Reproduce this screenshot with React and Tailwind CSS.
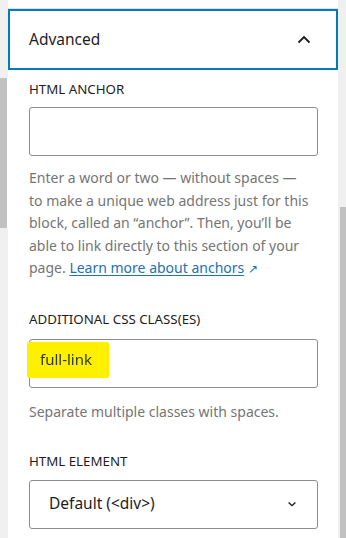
import React from "react";

const ChevronUp = () => (
  <svg width="24" height="24" viewBox="0 0 24 24" className="text-[#1e1e1e]">
    <path d="M6.5 14.5 12 9l5.5 5.5" fill="none" stroke="currentColor" strokeWidth="1.9" />
  </svg>
);

const ChevronDown = () => (
  <svg width="18" height="18" viewBox="0 0 24 24" className="text-[#1e1e1e]">
    <path d="M7.5 10 12 14.2 16.5 10" fill="none" stroke="currentColor" strokeWidth="1.9" />
  </svg>
);

const App = () => {
  return (
    <div className="flex h-[538px] w-[346px] overflow-hidden bg-white font-['Noto_Sans','Open_Sans',sans-serif]">
      {/* left scrollbar */}
      <div className="flex w-[8px] flex-col">
        <div className="h-[78px] bg-[#f0f0f0]" />
        <div className="h-[150px] w-[7px] bg-[#c1c1c1]" />
        <div className="flex-1 bg-[#f0f0f0]" />
      </div>

      <div className="flex w-[330px] flex-col">
        <div className="h-[9px] border-b border-[#e0e0e0]" />
        {/* panel header */}
        <div className="flex h-[61px] items-center justify-between border-2 border-[#007cba] pl-[19px] pr-[20px]">
          <span className="text-[15.5px] text-[#1e1e1e]">Advanced</span>
          <ChevronUp />
        </div>

        <div className="flex flex-col pl-[21px] pr-[12px] pt-[10px]">
          <label className="text-[13.3px] uppercase leading-[18px] text-[#1e1e1e]">
            HTML anchor
          </label>
          <div className="mt-[9px] h-[49px] w-[289px] rounded-[3px] border border-[#8c8c8c]" />
          <p className="mt-[11px] whitespace-nowrap text-[14px] leading-[22.5px] text-[#757575]">
            Enter a word or two — without spaces —<br />
            to make a unique web address just for this<br />
            block, called an “anchor”. Then, you’ll be<br />
            able to link directly to this section of your<br />
            page.{" "}
            <a className="text-[#2271b1] underline underline-offset-2">Learn more about anchors</a>
            <span className="ml-[4px] inline-block text-[12px] leading-none text-[#2271b1]">↗</span>
          </p>

          <label className="mt-[30px] text-[13.3px] uppercase leading-[18px] text-[#1e1e1e]">
            Additional CSS class(es)
          </label>
          <div className="mt-[11px] flex h-[49px] w-[289px] items-start rounded-[3px] border border-[#8c8c8c]">
            <span className="ml-[-3px] mt-[2px] flex h-[36px] w-[82px] items-center rounded-[2px] bg-[#fff000] pl-[13px] text-[15px] text-[#2f3a0f] blur-[0.3px]">
              full-link
            </span>
          </div>
          <p className="mt-[14px] text-[14px] leading-[20px] text-[#757575]">
            Separate multiple classes with spaces.
          </p>

          <label className="mt-[30px] text-[13.3px] uppercase leading-[18px] text-[#1e1e1e]">
            HTML element
          </label>
          <div className="mt-[10px] flex h-[49px] w-[289px] items-center justify-between rounded-[3px] border border-[#8c8c8c] pl-[19px] pr-[16px]">
            <span className="text-[15.5px] text-[#1e1e1e]">Default (&lt;div&gt;)</span>
            <ChevronDown />
          </div>
        </div>
      </div>

      {/* right scrollbar */}
      <div className="flex w-[8px] flex-col bg-[#f0f0f0]">
        <div className="h-[207px]" />
        <div className="ml-[2px] flex-1 bg-[#c1c1c1]" />
      </div>
    </div>
  );
};

export default App;
